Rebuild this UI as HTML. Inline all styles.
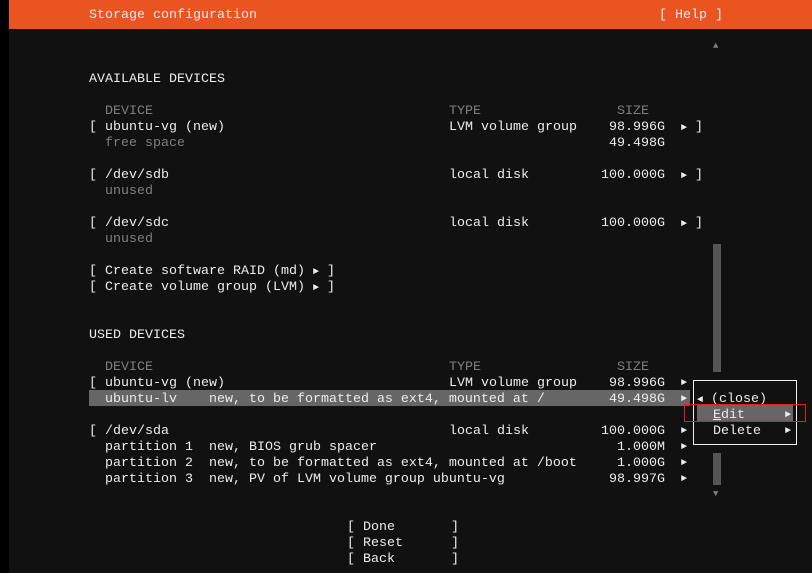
<!DOCTYPE html>
<html><head><meta charset="utf-8"><style>
html,body{margin:0;padding:0}
body{width:812px;height:573px;background:#111;position:relative;overflow:hidden;font-family:"Liberation Mono","DejaVu Sans Mono",monospace;font-size:13.33px;color:#ececec}
#lb{position:absolute;left:0;top:0;width:9px;height:573px;background:#000}
#hd{position:absolute;left:9px;top:0;width:803px;height:29px;background:#e95420}
.t{position:absolute;white-space:pre;line-height:16px;height:16px;margin-top:2px}
.g{color:#7f7f7f}
.hl{position:absolute;background:#666}
.sb{position:absolute;left:713px;width:8px;background:#555}
.a{font-size:10px}
</style></head><body>
<div id="lb"></div><div id="hd"></div>
<div class="t" style="left:89px;top:6px">Storage configuration</div>
<div class="t" style="left:659px;top:6px">[ Help ]</div>
<div class="t g" style="left:713px;top:36px;font-size:9px">▲</div>
<div class="sb" style="top:244px;height:128px"></div>
<div class="sb" style="top:453px;height:32px"></div>
<div class="t g" style="left:713px;top:484px;font-size:9px">▼</div>

<div class="t" style="left:89px;top:70px">AVAILABLE DEVICES</div>
<div class="t g" style="left:105px;top:102px">DEVICE</div>
<div class="t g" style="left:449px;top:102px">TYPE</div>
<div class="t g" style="left:617px;top:102px">SIZE</div>

<div class="t" style="left:89px;top:118px">[ ubuntu-vg (new)</div>
<div class="t" style="left:449px;top:118px">LVM volume group</div>
<div class="t" style="left:609px;top:118px">98.996G</div>
<div class="t" style="left:681px;top:118px"><span class="a">►</span> ]</div>
<div class="t g" style="left:105px;top:134px">free space</div>
<div class="t" style="left:609px;top:134px">49.498G</div>

<div class="t" style="left:89px;top:166px">[ /dev/sdb</div>
<div class="t" style="left:449px;top:166px">local disk</div>
<div class="t" style="left:601px;top:166px">100.000G</div>
<div class="t" style="left:681px;top:166px"><span class="a">►</span> ]</div>
<div class="t g" style="left:105px;top:182px">unused</div>

<div class="t" style="left:89px;top:214px">[ /dev/sdc</div>
<div class="t" style="left:449px;top:214px">local disk</div>
<div class="t" style="left:601px;top:214px">100.000G</div>
<div class="t" style="left:681px;top:214px"><span class="a">►</span> ]</div>
<div class="t g" style="left:105px;top:230px">unused</div>

<div class="t" style="left:89px;top:262px">[ Create software RAID (md) <span class="a">►</span> ]</div>
<div class="t" style="left:89px;top:278px">[ Create volume group (LVM) <span class="a">►</span> ]</div>

<div class="t" style="left:89px;top:326px">USED DEVICES</div>
<div class="t g" style="left:105px;top:358px">DEVICE</div>
<div class="t g" style="left:449px;top:358px">TYPE</div>
<div class="t g" style="left:617px;top:358px">SIZE</div>

<div class="t" style="left:89px;top:374px">[ ubuntu-vg (new)</div>
<div class="t" style="left:449px;top:374px">LVM volume group</div>
<div class="t" style="left:609px;top:374px">98.996G</div>
<div class="t a" style="left:681px;top:374px">►</div>
<div class="hl" style="left:89px;top:390px;width:601px;height:16px"></div>
<div class="t" style="left:105px;top:390px">ubuntu-lv    new, to be formatted as ext4, mounted at /</div>
<div class="t" style="left:609px;top:390px">49.498G</div>
<div class="t a" style="left:681px;top:390px">►</div>

<div class="t" style="left:89px;top:422px">[ /dev/sda</div>
<div class="t" style="left:449px;top:422px">local disk</div>
<div class="t" style="left:601px;top:422px">100.000G</div>
<div class="t a" style="left:681px;top:422px">►</div>
<div class="t" style="left:105px;top:438px">partition 1  new, BIOS grub spacer</div>
<div class="t" style="left:617px;top:438px">1.000M</div>
<div class="t a" style="left:681px;top:438px">►</div>
<div class="t" style="left:105px;top:454px">partition 2  new, to be formatted as ext4, mounted at /boot</div>
<div class="t" style="left:617px;top:454px">1.000G</div>
<div class="t a" style="left:681px;top:454px">►</div>
<div class="t" style="left:105px;top:470px">partition 3  new, PV of LVM volume group ubuntu-vg</div>
<div class="t" style="left:609px;top:470px">98.997G</div>
<div class="t a" style="left:681px;top:470px">►</div>

<div style="position:absolute;left:693px;top:380px;width:102px;height:63px;border:1px solid #eee;background:#111"></div>
<div class="hl" style="left:697px;top:405px;width:96px;height:16px"></div>
<div class="t" style="left:697px;top:390px"><span class="a">◄</span> (close)</div>
<div class="t" style="left:713px;top:406px"><span style="text-decoration:underline">E</span>dit</div>
<div class="t a" style="left:785px;top:406px">►</div>
<div class="t" style="left:713px;top:422px">Delete</div>
<div class="t a" style="left:785px;top:422px">►</div>
<div style="position:absolute;left:684px;top:404px;width:120px;height:16px;border:1px solid #e02020"></div>

<div class="t" style="left:347px;top:518px">[ Done       ]</div>
<div class="t" style="left:347px;top:534px">[ Reset      ]</div>
<div class="t" style="left:347px;top:550px">[ Back       ]</div>
</body></html>
